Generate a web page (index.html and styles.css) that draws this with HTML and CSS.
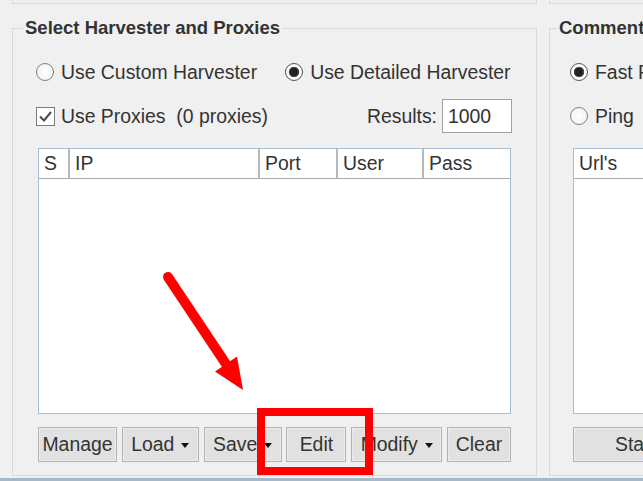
FILE: index.html
```html
<!DOCTYPE html>
<html>
<head>
<meta charset="utf-8">
<link rel="stylesheet" href="styles.css">
</head>
<body>
<div class="top">
  <div class="topbox l"></div>
  <div class="topbox r"></div>
</div>
<div class="main">
  <fieldset class="group left">
    <legend>Select Harvester and Proxies</legend>
    <div class="content">
      <div class="row radios">
        <label class="radio"><span class="dot"></span>Use Custom Harvester</label>
        <label class="radio on"><span class="dot"></span>Use Detailed Harvester</label>
      </div>
      <div class="row proxies">
        <label class="check"><span class="box"><svg width="19" height="19" viewBox="0 0 19 19"><path d="M4 9.5 L8 13.5 L15 5" fill="none" stroke="#4a4a4a" stroke-width="2"/></svg></span>Use Proxies&nbsp; (0 proxies)</label>
        <div class="results"><span>Results:</span><span class="field">1000</span></div>
      </div>
      <div class="table">
        <div class="thead">
          <div class="th c-s">S</div>
          <div class="th c-ip">IP</div>
          <div class="th c-port">Port</div>
          <div class="th c-user">User</div>
          <div class="th c-pass">Pass</div>
        </div>
        <div class="tbody"></div>
      </div>
      <div class="buttons">
        <div class="btn b-manage">Manage</div>
        <div class="btn b-load">Load<span class="caret"></span></div>
        <div class="btn b-save">Save<span class="caret"></span></div>
        <div class="btn b-edit">Edit</div>
        <div class="btn b-modify">Modify<span class="caret"></span></div>
        <div class="btn b-clear">Clear</div>
      </div>
    </div>
  </fieldset>
  <fieldset class="group right">
    <legend>Comment Poster</legend>
    <div class="content">
      <div class="row radios">
        <label class="radio on"><span class="dot"></span>Fast Parse</label>
      </div>
      <div class="row proxies">
        <label class="radio"><span class="dot"></span>Ping</label>
      </div>
      <div class="table">
        <div class="thead">
          <div class="th c-url">Url's</div>
        </div>
        <div class="tbody"></div>
      </div>
      <div class="buttons">
        <div class="btn b-start">Start</div>
      </div>
    </div>
  </fieldset>
</div>
<div class="statusbar"></div>
<svg class="annot" width="643" height="481" viewBox="0 0 643 481">
  <rect x="261" y="412" width="108" height="59" fill="none" stroke="#ff0000" stroke-width="8"/>
  <line x1="168" y1="277" x2="228" y2="367" stroke="#ff0000" stroke-width="10" stroke-linecap="round"/>
  <polygon points="243,390 237,356.5 215,371.5" fill="#ff0000"/>
</svg>
</body>
</html>
```

FILE: styles.css
```css
html, body {
  margin: 0;
  padding: 0;
}
body {
  width: 643px;
  height: 481px;
  overflow: hidden;
  background: #f0f0f0;
  font-family: "Liberation Sans", Arial, sans-serif;
  font-size: 19.4px;
  color: #333;
  position: relative;
}
.top {
  display: flex;
  gap: 12px;
  height: 4px;
  padding-left: 12px;
}
.topbox {
  border: 1px solid #d9d9d9;
  border-top: none;
  height: 3px;
  flex: none;
}
.topbox.l { width: 523px; }
.topbox.r { width: 200px; }

.main {
  display: flex;
  gap: 12px;
  padding-left: 12px;
  margin-top: 14px;
}
.group {
  margin: 0;
  padding: 0;
  border: 1px solid #d9d9d9;
  min-width: 0;
  flex: none;
}
.group.left { width: 523px; }
.group.right { width: 173px; }
.group legend {
  margin-left: 10px;
  padding: 0 2px;
  font-weight: bold;
  font-size: 18.5px;
  line-height: 20px;
  color: #333;
  white-space: nowrap;
}
.group.right legend { margin-left: 7px; }

.content {
  padding: 22px 25px 13px;
}
.group.right .content { padding-left: 23px; }

.row {
  display: flex;
  align-items: center;
}
.radios {
  height: 24px;
  gap: 28px;
  margin-left: -2px;
}
.group.right .radios, .group.right .proxies { margin-left: -3px; }
.proxies {
  margin-top: 15px;
  height: 34px;
  justify-content: space-between;
  margin-left: -2px;
  margin-right: -1px;
}
.radio, .check {
  display: flex;
  align-items: center;
  white-space: nowrap;
}
.dot {
  width: 18px;
  height: 18px;
  box-sizing: border-box;
  border-radius: 50%;
  border: 1px solid #808080;
  background: radial-gradient(circle, #ffffff 0, #f4f4f4 70%, #e6e6e6 100%);
  margin-right: 7px;
  flex: none;
}
.radio.on .dot {
  border-color: #555;
  background: radial-gradient(circle, #222 0, #222 4px, #666 5px, #fff 5.6px, #f2f2f2 100%);
}
.box {
  width: 19px;
  height: 19px;
  box-sizing: border-box;
  border: 1px solid #7d7d7d;
  background: #fff;
  margin-right: 6px;
  display: flex;
  align-items: center;
  justify-content: center;
  flex: none;
}
.box svg { display: block; flex: none; }
.results {
  display: flex;
  align-items: center;
  gap: 5px;
}
.field {
  width: 70px;
  height: 34px;
  box-sizing: border-box;
  border: 1px solid #a2a2a2;
  background: #fff;
  padding-left: 5px;
  line-height: 32px;
}

.table {
  margin-top: 15px;
  height: 266px;
  box-sizing: border-box;
  border: 1px solid #a9bdd3;
  background: #fff;
  display: flex;
  flex-direction: column;
}
.group.right .table { margin-right: -40px; }
.thead {
  display: flex;
  height: 30px;
  box-sizing: border-box;
  border-bottom: 1px solid #a8a8a8;
}
.th {
  box-sizing: border-box;
  padding-left: 5px;
  line-height: 29px;
  border-right: 2px solid #b8b8b8;
  white-space: nowrap;
}
.c-s { width: 31px; }
.c-ip { width: 190px; }
.c-port { width: 78px; }
.c-user { width: 86px; }
.c-pass { flex: 1; border-right: none; }
.c-url { flex: 1; border-right: none; }
.tbody { flex: 1; }

.buttons {
  margin-top: 13px;
  height: 35px;
  display: flex;
  justify-content: space-between;
}
.btn {
  height: 35px;
  box-sizing: border-box;
  border: 1px solid #b3b3b3;
  box-shadow: inset 0 0 0 1px #ececec;
  background: #e1e1e1;
  display: flex;
  align-items: center;
  justify-content: center;
  white-space: nowrap;
}
.b-manage { width: 79px; }
.b-load { width: 77px; }
.b-save { width: 78px; }
.b-edit { width: 60px; }
.b-modify { width: 91px; }
.b-clear { width: 64px; }
.b-start { width: 125px; }
.caret {
  width: 0;
  height: 0;
  border-left: 4.5px solid transparent;
  border-right: 4.5px solid transparent;
  border-top: 5px solid #111;
  margin-left: 7px;
  margin-top: 2px;
}

.statusbar {
  margin-top: 2px;
  height: 3px;
  background: #a9b8c9;
}
.annot {
  position: absolute;
  left: 0;
  top: 0;
}
```
